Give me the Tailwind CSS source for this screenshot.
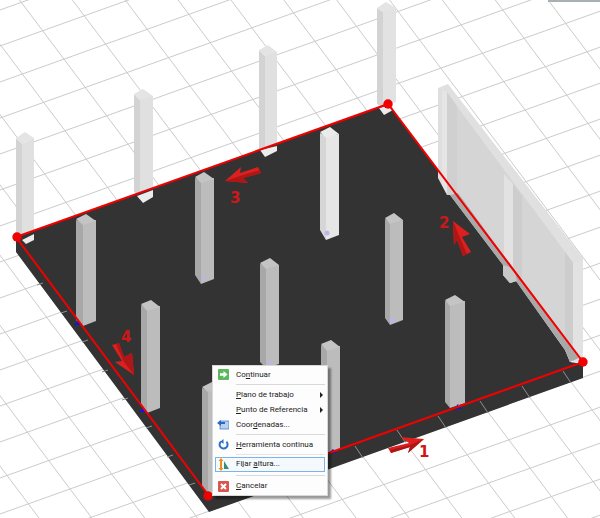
<!DOCTYPE html>
<html lang="en">
<head>
    <meta charset="UTF-8">
    <title>Fijar altura</title>
    <script src="https://cdn.jsdelivr.net/npm/@tailwindcss/browser@4"></script>
</head>
<body class="bg-white">
    <div class="relative w-[600px] h-[518px] overflow-hidden bg-white font-['Roboto',sans-serif]">
        <svg id="scene" class="block" width="600" height="518" viewBox="0 0 600 518">
            <g id="grid" stroke="#cbcbcb" stroke-width="1"></g>
            <rect x="548" y="0" width="52" height="2" fill="#a9b0b3"/>

            <!-- back columns -->
            <g id="back">
                <path d="M22 144V236L34 232V138Z" fill="#e0e0e0"/><path d="M16 138V236L22 240V144Z" fill="#d3d3d3"/><path d="M16 138L25 132L34 138L22 144Z" fill="#e4e4e4"/>
                <path d="M140 96V192L153 188V96Z" fill="#e0e0e0"/><path d="M134 94V192L140 196V100Z" fill="#d3d3d3"/><path d="M134 94L143 89L153 96L140 100Z" fill="#e4e4e4"/>
                <path d="M265 52V150L277 146V52Z" fill="#e0e0e0"/><path d="M259 50V150L265 152V56Z" fill="#d3d3d3"/><path d="M259 50L268 45L277 52L265 56Z" fill="#e4e4e4"/>
                <path d="M383 10V106L396 102V8Z" fill="#e2e2e2"/><path d="M377 8V104L383 108V12Z" fill="#d3d3d3"/><path d="M377 8L386 2L396 8L383 12Z" fill="#e4e4e4"/>
            </g>

            <!-- wall on the right -->
            <path d="M445 90L583 270V366L575 360L445 192Z" fill="#d5d5d5"/>
            <path d="M438 88L448 84L583 258V276L450 97Z" fill="#e0e0e0"/>
            <path d="M447 92L457 106V208L447 194Z" fill="#d0d0d0"/>
            <path d="M438 88L442 90V186L438 178Z" fill="#dedede"/>
            <path d="M442 90L447 92V195L442 186Z" fill="#e5e5e5"/>
            <path d="M513 184L522 196V295L513 283Z" fill="#cdcdcd"/>
            <path d="M504 174L513 184V283L504 272Z" fill="#e2e2e2"/>
            <path d="M565 252L573 263V360L565 350Z" fill="#cdcdcd"/>
            <path d="M573 263L583 260V362H573Z" fill="#e2e2e2"/>

            <!-- slab -->
            <path d="M16 237L388 104L438 170V178L447 195L450 195L503 265V275L510 283L516 281L565 350L570 362L583 364V378L209 512L16 252Z" fill="#333333"/>
            <path d="M450 195L458 193L579 358L570 362L565 350L516 281L510 283L503 275V265Z" fill="#a9a9a9"/>
            <path d="M503 265L514 268L517 281L510 283L503 275Z" fill="#c8c8c8"/>
            <g stroke="#8f8f8f" stroke-width="1">
                <path d="M355 446L363 458M397 430L405 442M438 416L446 428M480 401L488 413M522 386L530 398M563 371L571 383"/>
                <path d="M43 283L37 285M67 311L61 313M88 340L82 342M108 370L102 372M128 398L122 400M152 426L146 428M173 455L167 457M195 483L189 485"/>
            </g>

            <!-- base blocks of back columns -->
            <g fill="#ececec">
                <path d="M22 240L34 234V240L26 244Z"/>
                <path d="M137 196L153 190V197L143 203Z"/>
                <path d="M260 150L277 146V151L265 157Z"/>
                <path d="M379 108L393 104V110L384 115Z"/>
            </g>

            <!-- front columns -->
            <g>
                <path d="M83 222V326L96 321V220Z" fill="#bcbcbc"/><path d="M76 220V320L83 326V222Z" fill="#a8a8a8"/><path d="M76 219L86 214L96 221L83 225Z" fill="#c4c4c4"/>
                <path d="M201 180V284L214 279V178Z" fill="#bcbcbc"/><path d="M195 178V275L201 284V180Z" fill="#a8a8a8"/><path d="M195 177L204 172L214 179L201 183Z" fill="#c4c4c4"/>
                <path d="M326 136V240L339 235V134Z" fill="#e6e6e6"/><path d="M320 133V230L326 240V136Z" fill="#d6d6d6"/><path d="M320 132L330 127L339 134L326 138Z" fill="#ebebeb"/>
                <path d="M390 221V325L403 320V220Z" fill="#bcbcbc"/><path d="M385 219V318L390 325V221Z" fill="#a8a8a8"/><path d="M385 218L394 213L403 220L390 224Z" fill="#c4c4c4"/>
                <path d="M266 265V368L279 364V265Z" fill="#bcbcbc"/><path d="M260 264V362L266 368V265Z" fill="#a8a8a8"/><path d="M260 263L270 258L279 265L266 269Z" fill="#c4c4c4"/>
                <path d="M147 307V413L160 408V306Z" fill="#bcbcbc"/><path d="M141 305V406L147 413V307Z" fill="#a8a8a8"/><path d="M141 304L151 300L160 307L147 311Z" fill="#c4c4c4"/>
                <path d="M327 347V453L340 449V346Z" fill="#bcbcbc"/><path d="M321 345V446L327 453V347Z" fill="#a8a8a8"/><path d="M321 344L331 340L340 347L327 351Z" fill="#c4c4c4"/>
                <path d="M450 302V408L465 403V301Z" fill="#bcbcbc"/><path d="M445 301V402L450 408V302Z" fill="#a8a8a8"/><path d="M445 300L455 295L465 302L450 306Z" fill="#c4c4c4"/>
                <path d="M208 390V494L222 490V388Z" fill="#bcbcbc"/><path d="M202 388V488L208 494V390Z" fill="#a8a8a8"/><path d="M202 387L212 382L222 388L208 392Z" fill="#c4c4c4"/>
            </g>

            <!-- snap markers -->
            <g fill="#b9b6e8">
                <circle cx="204" cy="277" r="2"/><circle cx="327" cy="233" r="2.5"/><circle cx="392" cy="320" r="2.5"/><circle cx="270" cy="362" r="2"/>
            </g>
            <g fill="#1414e0">
                <path d="M78 321L82 325H74Z"/><path d="M143 408L147 412H139Z"/><path d="M333 449L337 453H329Z"/><path d="M458 404L462 409H454Z"/>
            </g>
            <circle cx="459" cy="406" r="1" fill="#e8d820"/>

            <!-- red outline -->
            <path d="M16 237L388 104L583 362L209 496Z" fill="none" stroke="#f00000" stroke-width="2"/>
            <g fill="#f00000">
                <circle cx="17" cy="237" r="4.7"/><circle cx="388" cy="104" r="4.7"/><circle cx="583" cy="362" r="4.7"/><circle cx="208" cy="496" r="4.7"/>
            </g>

            <!-- arrows -->
            <g fill="#dc2020">
                <path d="M388 448L409 443L400 437L424 439L408 453L410 447L391 453Z"/>
                <path d="M453 221L470 234L462 237L471 252L463 256L457 240L454 245Z"/>
                <path d="M225 181L241 167L240 173L258 167L261 173L243 178L248 183Z"/>
                <path d="M112 345L119 343L124 357L132 353L134 375L115 362L122 361Z"/>
            </g>
            <g fill="#b01616">
                <path d="M390 450L410 445L424 439L408 453L410 447L391 453Z"/>
                <path d="M467 254L463 256L457 240L454 245L453 221L460 238Z"/>
                <path d="M225 181L243 175L260 170L261 173L243 178L248 183Z"/>
                <path d="M116 344L119 343L124 357L132 353L134 375L124 362Z"/>
            </g>
            <g fill="#cc1818" font-family="'DejaVu Sans',sans-serif" font-weight="700" font-size="15">
                <text x="419" y="457">1</text>
                <text x="439" y="228">2</text>
                <text x="230" y="203">3</text>
                <text x="121" y="342">4</text>
            </g>
        </svg>

        <!-- context menu -->
        <div class="absolute left-[212px] top-[365px] w-[116px] h-[131px] flex flex-col bg-[#fdfdfd] border border-[#d8d8d8] shadow-[3px_3px_2px_rgba(0,0,0,0.4)] text-[8px] leading-none whitespace-nowrap text-[#222]">
            <div class="h-[18px] flex items-center">
                <svg class="ml-[5px] w-[11px] h-[11px]" viewBox="0 0 11 11"><rect width="11" height="11" rx="1" fill="#5cb85c"/><path d="M2 4.2H5.5V2L9.5 5.5L5.5 9V6.8H2Z" fill="#fff"/></svg>
                <span class="ml-[7px]">Co<u>n</u>tinuar</span>
            </div>
            <div class="h-px ml-[23px] mr-[2px] bg-[#d9d9d9]"></div>
            <div class="h-[15px] mt-[3px] flex items-center pl-[23px] pr-[4px] justify-between">
                <span><u>P</u>lano de trabajo</span><span class="w-0 h-0 border-y-[3px] border-y-transparent border-l-[3px] border-l-[#222]"></span>
            </div>
            <div class="h-[15px] flex items-center pl-[23px] pr-[4px] justify-between">
                <span><u>P</u>unto de Referencia</span><span class="w-0 h-0 border-y-[3px] border-y-transparent border-l-[3px] border-l-[#222]"></span>
            </div>
            <div class="h-[15px] flex items-center">
                <svg class="ml-[4px] w-[12px] h-[11px]" viewBox="0 0 12 11"><rect x="3" y="2" width="9" height="8" fill="#b8d0ee" stroke="#4a80c8" stroke-width="0.8"/><path d="M0 4L4 1V3H8V5H4V7Z" fill="#2a68c0"/></svg>
                <span class="ml-[7px]">Coor<u>d</u>enadas...</span>
            </div>
            <div class="h-px mt-[2px] ml-[23px] mr-[2px] bg-[#d9d9d9]"></div>
            <div class="h-[18px] mt-[1px] flex items-center">
                <svg class="ml-[5px] w-[11px] h-[11px]" viewBox="0 0 11 11"><path d="M3 2.5A4 4 0 1 0 8.5 2.8" fill="none" stroke="#2f6fc8" stroke-width="2"/><path d="M5.5 0V5L2.5 2.5Z" fill="#2f6fc8"/></svg>
                <span class="ml-[7px]"><u>H</u>erramienta continua</span>
            </div>
            <div class="h-px ml-[23px] mr-[2px] bg-[#e4e4e4]"></div>
            <div class="h-[16px] mt-[2px] mx-[2px] flex items-center bg-[#f4f9fe] border border-[#7db3e6]">
                <svg class="ml-[2px] w-[11px] h-[13px]" viewBox="0 0 11 13"><path d="M3 0L5.5 3H4V10H5.5L3 13L.5 10H2V3H.5Z" fill="#e8901c"/><path d="M6 3L11 11H6Z" fill="#3d8a7a"/></svg>
                <span class="ml-[7px]">Fijar <u>a</u>ltura...</span>
            </div>
            <div class="h-px mt-[3px] ml-[23px] mr-[2px] bg-[#d9d9d9]"></div>
            <div class="h-[18px] mt-[1px] flex items-center">
                <svg class="ml-[5px] w-[11px] h-[11px]" viewBox="0 0 11 11"><rect width="11" height="11" rx="1" fill="#d9564f"/><path d="M3 3L8 8M8 3L3 8" stroke="#fff" stroke-width="2"/></svg>
                <span class="ml-[7px]"><u>C</u>ancelar</span>
            </div>
        </div>
    </div>

    <script>
        // ground grid, two families of parallel lines
        const grid = document.getElementById("grid");
        function addLine(x1, y1, x2, y2) {
            const line = document.createElementNS("http://www.w3.org/2000/svg", "line");
            line.setAttribute("x1", x1);
            line.setAttribute("y1", y1);
            line.setAttribute("x2", x2);
            line.setAttribute("y2", y2);
            grid.appendChild(line);
        }
        for (let k = -12; k < 12; k++) {
            const c = -26 + 70.3 * k;
            addLine(-10, c - 13.3, 610, c + 811.3);
        }
        for (let k = -2; k < 30; k++) {
            const d = 46 + 36 * k;
            addLine(-10, d + 3.58, 610, d - 218.4);
        }
    </script>
</body>
</html>
